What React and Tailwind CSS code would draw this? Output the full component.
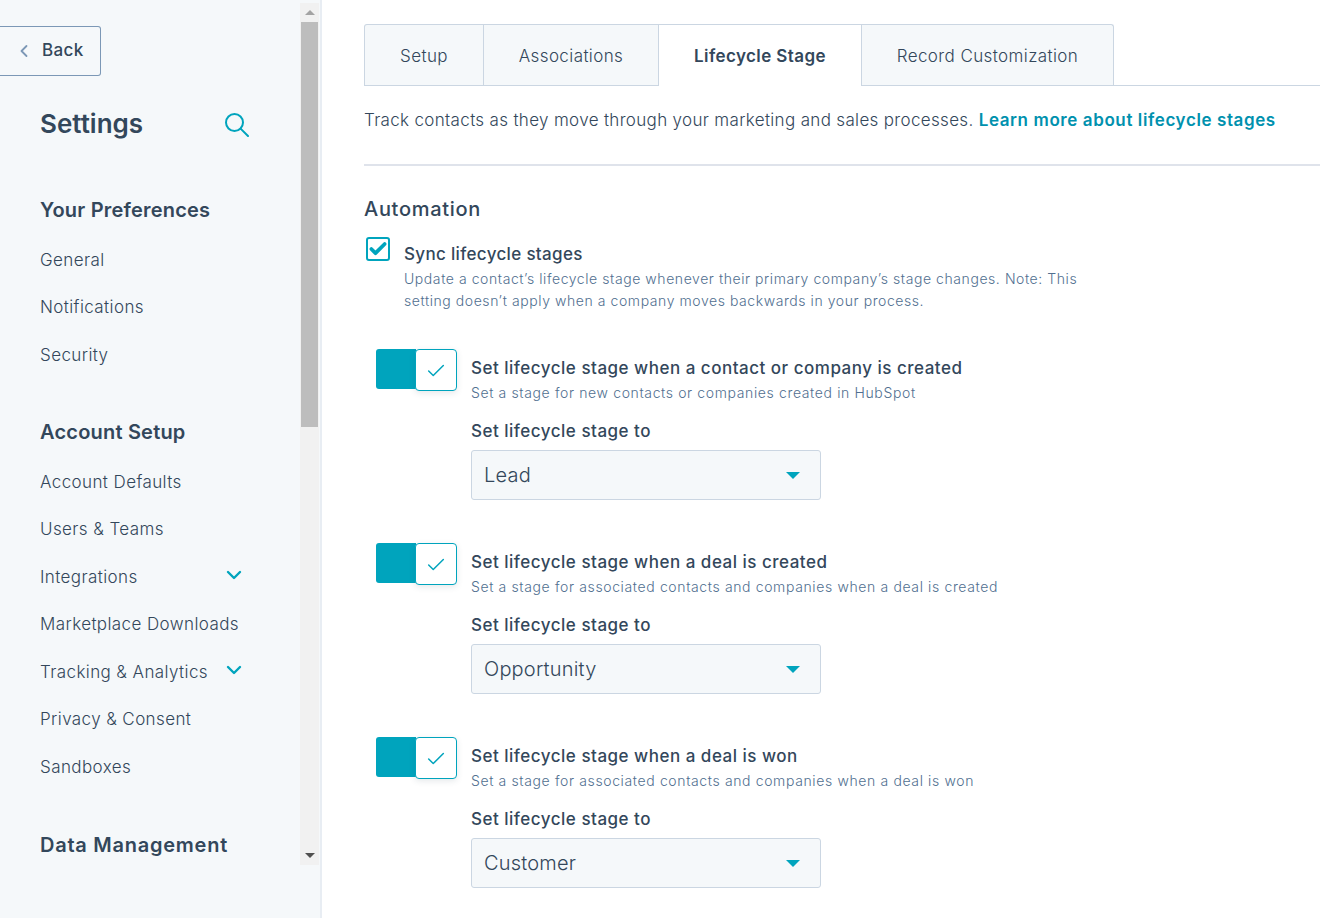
import React from "react";
import { ChevronLeft, ChevronDown, Check } from "lucide-react";

const font = "font-['Inter','Noto_Sans',sans-serif]";

function NavGroup({ title, items, titleClass = "tracking-[0.2px]" }) {
  return (
    <div className="mb-[41px]">
      <h3 className={`mb-[14.5px] h-[24px] text-[20px] leading-[24px] font-semibold text-[#33475b] ${titleClass}`}>{title}</h3>
      {items.map(([label, open]) => (
        <div key={label} className="flex h-[47.5px] items-center justify-between pr-[54px] text-[17px] font-light tracking-[0.4px] text-[#33475b]">
          <span>{label}</span>
          {open && <ChevronDown size={24} strokeWidth={2.4} className="mb-[4px] text-[#00a4bd]" />}
        </div>
      ))}
    </div>
  );
}

function Sidebar() {
  return (
    <aside className="flex h-[918px] w-[322px] shrink-0 overflow-hidden border-r-2 border-[#e8edf3] bg-[#f5f8fa]">
      <div className="w-[300px] shrink-0 overflow-hidden">
        <button className="mt-[26px] flex h-[50px] w-[101px] items-center rounded-r-[3px] border border-l-0 border-[#7c98b6] pl-[14px] text-[17px] font-medium tracking-[0.4px] text-[#33475b]">
          <ChevronLeft size={20} strokeWidth={2.2} className="mr-[8px] text-[#7c98b6]" />
          Back
        </button>
        <div className="mt-[28px] ml-[40px] flex items-center justify-between pr-[51px]">
          <h2 className="text-[26px] leading-[40px] font-semibold text-[#33475b]">Settings</h2>
          <svg width="24" height="24" viewBox="0 0 24 24" fill="none" stroke="#00a4bd" strokeWidth="2" strokeLinecap="round" className="mt-[2px]">
            <circle cx="9.5" cy="9.5" r="8.5" />
            <path d="M15.6 15.6 23 23" />
          </svg>
        </div>
        <div className="mt-[54px] ml-[40px]">
          <NavGroup title="Your Preferences" items={[["General"], ["Notifications"], ["Security"]]} />
          <NavGroup
            title="Account Setup"
            items={[
              ["Account Defaults"],
              ["Users & Teams"],
              ["Integrations", true],
              ["Marketplace Downloads"],
              ["Tracking & Analytics", true],
              ["Privacy & Consent"],
              ["Sandboxes"],
            ]}
          />
          <NavGroup title="Data Management" items={[]} titleClass="pt-[1px] tracking-[0.75px]" />
        </div>
      </div>
      <div className="mt-[3px] flex h-[862px] w-[19px] shrink-0 flex-col bg-[#f1f1f1]">
        <div className="flex h-[19px] items-center justify-center">
          <div className="h-0 w-0 border-x-[5px] border-b-[5px] border-x-transparent border-b-[#a3a3a3]" />
        </div>
        <div className="mx-[1px] h-[405px] bg-[#bdbdbd]" />
        <div className="flex-1" />
        <div className="flex h-[19px] items-center justify-center">
          <div className="h-0 w-0 border-x-[5px] border-t-[5px] border-x-transparent border-t-[#505050]" />
        </div>
      </div>
    </aside>
  );
}

function Tabs() {
  const tabs = [
    ["Setup", "w-[120px]"],
    ["Associations", "w-[175px]"],
    ["Lifecycle Stage", "w-[202px]"],
    ["Record Customization", "w-[253px]"],
  ];
  return (
    <div className="flex h-[62px] border-b border-[#cbd6e2]">
      {tabs.map(([label, width], i) => {
        const active = label === "Lifecycle Stage";
        return (
          <div
            key={label}
            className={
              active
                ? `${width} -mb-px flex h-[62px] items-center justify-center border-t border-[#cbd6e2] bg-white pt-[2px] text-[17px] font-semibold tracking-[0.4px] text-[#33475b]`
                : `${width} flex h-[61px] items-center justify-center border-t border-r border-[#cbd6e2] bg-[#f5f8fa] pt-[3px] text-[17px] font-light tracking-[0.4px] text-[#33475b] ${i === 0 ? "rounded-tl-[3px] border-l" : ""} ${i === 3 ? "rounded-tr-[3px] border-l" : ""}`
            }
          >
            {label}
          </div>
        );
      })}
    </div>
  );
}

function StageRule({ title, help, value }) {
  return (
    <div className="mb-[43px] flex pl-[12px]">
      <div className="flex h-[42px] w-[81px] shrink-0">
        <div className="h-[40px] w-[40px] rounded-l-[3px] bg-[#00a4bd]" />
        <div className="-ml-px flex h-[42px] w-[42px] items-center justify-center rounded-[4px] border-[1.5px] border-[#00a4bd] bg-white shadow-[0_2px_6px_rgba(45,62,80,0.12)]">
          <Check size={22} strokeWidth={1.6} className="mt-[2px] shrink-0 text-[#00a4bd]" />
        </div>
      </div>
      <div className="ml-[14px] pt-[7px]">
        <div className="h-[24px] text-[17px] leading-[24px] font-medium tracking-[0.5px] text-[#33475b]">{title}</div>
        <div className="mt-[2px] text-[14px] leading-[22px] font-light tracking-[0.63px] text-[#516f90]">{help}</div>
        <div className="mt-[15px] text-[17px] leading-[24px] font-medium tracking-[0.5px] text-[#33475b]">Set lifecycle stage to</div>
        <div className="mt-[7px] flex h-[50px] w-[350px] items-center justify-between rounded-[3px] border border-[#cbd6e2] bg-[#f5f8fa] pr-[20px] pl-[12px]">
          <span className="text-[20px] font-light tracking-[0.2px] text-[#33475b]">{value}</span>
          <div className="h-0 w-0 border-x-[7px] border-t-[7px] border-x-transparent border-t-[#00a4bd]" />
        </div>
      </div>
    </div>
  );
}

export default function App() {
  return (
    <div className={`flex h-[918px] w-[1320px] overflow-hidden bg-white ${font}`}>
      <Sidebar />
      <main className="min-w-0 flex-1 pt-[24px] pl-[42px]">
        <Tabs />
        <p className="mt-[22px] text-[17px] leading-[24px] font-light tracking-[0.33px] whitespace-nowrap text-[#33475b]">
          Track contacts as they move through your marketing and sales processes.{" "}
          <a className="font-semibold tracking-[0.6px] text-[#0091ae]">Learn more about lifecycle stages</a>
        </p>
        <hr className="mt-[32px] border-t-2 border-[#dfe3eb]" />
        <h3 className="mt-[30px] text-[20px] leading-[26px] font-medium tracking-[0.7px] text-[#33475b]">Automation</h3>
        <div className="mt-[14px] flex">
          <div className="mt-[1px] ml-[2px] flex h-[24px] w-[24px] items-center justify-center rounded-[3px] border-2 border-[#00a4bd]">
            <Check size={20} strokeWidth={4.5} className="shrink-0 text-[#00a4bd]" />
          </div>
          <div className="ml-[14px] w-[690px] pt-[6px]">
            <div className="h-[24px] text-[17px] leading-[24px] font-medium tracking-[0.33px] text-[#33475b]">Sync lifecycle stages</div>
            <p className="mt-[2px] text-[14px] leading-[22px] font-light tracking-[0.57px] text-[#516f90]">
              Update a contact’s lifecycle stage whenever their primary company’s stage changes. Note: This setting doesn’t apply when a company moves backwards in your process.
            </p>
          </div>
        </div>
        <div className="mt-[37px]">
          <StageRule title="Set lifecycle stage when a contact or company is created" help="Set a stage for new contacts or companies created in HubSpot" value="Lead" />
          <StageRule title="Set lifecycle stage when a deal is created" help="Set a stage for associated contacts and companies when a deal is created" value="Opportunity" />
          <StageRule title="Set lifecycle stage when a deal is won" help="Set a stage for associated contacts and companies when a deal is won" value="Customer" />
        </div>
      </main>
    </div>
  );
}
